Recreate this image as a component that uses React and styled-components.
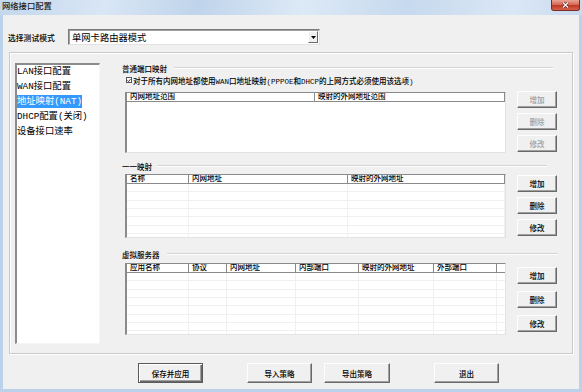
import React from 'react';
import styled, { createGlobalStyle } from 'styled-components';

const GlobalStyle = createGlobalStyle`
  html, body { margin: 0; padding: 0; background: #fff; }
  body {
    font-family: "Liberation Mono", "Noto Sans CJK SC", monospace;
    font-weight: 500;
    color: #000;
  }
  * { box-sizing: border-box; }
`;

const natCols = [{ w: 188, label: '内网地址范围' }, { w: 190, label: '映射的外网地址范围' }];
const oneCols = [{ w: 62, label: '名称' }, { w: 159, label: '内网地址' }, { w: 157, label: '映射的外网地址' }];
const vsCols = [
  { w: 62, label: '应用名称' },
  { w: 38, label: '协议' },
  { w: 69, label: '内网地址' },
  { w: 63, label: '内部端口' },
  { w: 75, label: '映射的外网地址' },
  { w: 63, label: '外部端口' },
  { w: 9, label: '' },
];

const navItems = ['LAN接口配置', 'WAN接口配置', '地址映射(NAT)', 'DHCP配置(关闭)', '设备接口速率'];

export default function App() {
  return (
    <>
      <GlobalStyle />
      <Window>
        <TitleBar>
          <Title>网络接口配置</Title>
          <CloseButton>
            <svg width="9" height="6" viewBox="0 0 9 6">
              <path d="M2 0.5 L7 5.5 M7 0.5 L2 5.5" stroke="#5a1a12" strokeWidth="2.4" />
              <path d="M2 0.5 L7 5.5 M7 0.5 L2 5.5" stroke="#fff" strokeWidth="1.3" />
            </svg>
          </CloseButton>
        </TitleBar>
        <Client>
          <ModeRow>
            <ModeLabel>选择测试模式</ModeLabel>
            <Select>
              <span>单网卡路由器模式</span>
              <SelectArrow>
                <svg width="5" height="3" viewBox="0 0 5 3">
                  <path d="M0 0 L5 0 L2.5 3 Z" fill="#000" />
                </svg>
              </SelectArrow>
            </Select>
          </ModeRow>

          <MainGroup>
            <NavList>
              {navItems.map((t, i) => (
                <NavItem key={t} $active={i === 2}>{t}</NavItem>
              ))}
            </NavList>

            <RightPane>
              <SectionHeader $mt={0} $mr={19}>
                <span>普通端口映射</span>
                <Rule $gap={7} />
              </SectionHeader>
              <CheckRow>
                <CheckBox>
                  <svg width="5" height="5" viewBox="0 0 5 5">
                    <path d="M0.6 2.4 L2 3.8 L4.4 0.8" stroke="#000" strokeWidth="1" fill="none" />
                  </svg>
                </CheckBox>
                <span>对于所有内网地址都使用WAN口地址映射(PPPOE和DHCP的上网方式必须使用该选项)</span>
              </CheckRow>
              <Block $mt={6}>
                <DataTable cols={natCols} rows={0} height={61} top={1} />
                <ButtonCol $pt={0} $gap={5}>
                  <SideButton $disabled>增加</SideButton>
                  <SideButton $disabled>删除</SideButton>
                  <SideButton $disabled>修改</SideButton>
                </ButtonCol>
              </Block>

              <SectionHeader $mt={8} $mr={25}>
                <span>一一映射</span>
                <Rule $gap={5} />
              </SectionHeader>
              <Block $mt={2}>
                <DataTable cols={oneCols} rows={7} height={64} top={1} />
                <ButtonCol $pt={2} $gap={5}>
                  <SideButton>增加</SideButton>
                  <SideButton>删除</SideButton>
                  <SideButton>修改</SideButton>
                </ButtonCol>
              </Block>

              <SectionHeader $mt={11} $mr={14}>
                <span>虚拟服务器</span>
                <Rule $gap={7} />
              </SectionHeader>
              <Block $mt={4}>
                <DataTable cols={vsCols} rows={8} height={72} top={0} />
                <ButtonCol $pt={4} $gap={7}>
                  <SideButton>增加</SideButton>
                  <SideButton>删除</SideButton>
                  <SideButton>修改</SideButton>
                </ButtonCol>
              </Block>
            </RightPane>
          </MainGroup>

          <Footer>
            <FooterButton $default $w={65} $ml={130}>保存并应用</FooterButton>
            <FooterButton $w={65} $ml={44}>导入策略</FooterButton>
            <FooterButton $w={66} $ml={12}>导出策略</FooterButton>
            <FooterButton $w={65} $ml={44}>退出</FooterButton>
          </Footer>
        </Client>
      </Window>
    </>
  );
}

function DataTable({ cols, rows, height, top }) {
  return (
    <TableBox $h={height} $mt={top}>
      <HeadRow>
        {cols.map((c, i) => (
          <HeadCell key={i} $w={c.w}>{c.label}</HeadCell>
        ))}
      </HeadRow>
      {Array.from({ length: rows }).map((_, r) => (
        <Row key={r}>
          {cols.map((c, i) => (
            <Cell key={i} $w={c.w} />
          ))}
        </Row>
      ))}
    </TableBox>
  );
}

const Window = styled.div`
  width: 582px;
  height: 392px;
  display: flex;
  flex-direction: column;
  background: #bcd2ea;
`;

const TitleBar = styled.div`
  height: 15px;
  display: flex;
  justify-content: space-between;
  align-items: flex-start;
  padding-left: 2px;
  background: linear-gradient(100deg, #c3d7ed 0%, #d9e6f5 18%, #bfd4eb 34%, #dde9f6 52%, #c6d9ee 70%, #dbe7f5 88%, #c8daee 100%);
`;

const Title = styled.div`
  font-size: 8.3px;
  line-height: 14px;
  color: #1a1a1a;
`;

const CloseButton = styled.div`
  width: 29px;
  height: 11px;
  margin-right: 2px;
  border: 1px solid #7c2b22;
  border-top: none;
  border-radius: 0 0 3px 3px;
  background: linear-gradient(#e9a697 0%, #d66a55 45%, #c13a26 55%, #d4634d 100%);
  display: flex;
  align-items: center;
  justify-content: center;
`;

const Client = styled.div`
  flex: 1;
  margin: 0 3px 3px 3px;
  padding: 14px 0 0 5px;
  background: #f0f0f0;
  display: flex;
  flex-direction: column;
`;

const ModeRow = styled.div`
  display: flex;
  align-items: center;
  height: 16px;
`;

const ModeLabel = styled.div`
  width: 60px;
  font-size: 7.8px;
`;

const Select = styled.div`
  width: 252px;
  height: 16px;
  display: flex;
  align-items: center;
  justify-content: space-between;
  padding-left: 3px;
  background: #fff;
  border: 1px solid;
  border-color: #7a7a7a #e3e3e3 #e3e3e3 #7a7a7a;
  box-shadow: inset 1px 1px 0 #a0a0a0;
  font-size: 9.3px;
  font-weight: 400;
`;

const SelectArrow = styled.div`
  width: 10px;
  height: 12px;
  margin-right: 1px;
  display: flex;
  align-items: center;
  justify-content: center;
  background: #f0f0f0;
  border: 1px solid;
  border-color: #fff #696969 #696969 #fff;
`;

const MainGroup = styled.div`
  width: 564px;
  height: 302px;
  margin: 7px 0 0 1px;
  padding: 10px 0 0 5px;
  display: flex;
  border: 1px solid #cacaca;
  box-shadow: inset 1px 1px 0 #fff, 1px 1px 0 #fff;
`;

const NavList = styled.div`
  width: 85px;
  height: 281px;
  display: flex;
  flex-direction: column;
  align-items: flex-start;
  background: #fff;
  border-style: solid;
  border-width: 2px 1px 1px 2px;
  border-color: #8c8c8c #f6f6f6 #f6f6f6 #8c8c8c;
`;

const NavItem = styled.div`
  height: 13px;
  line-height: 13px;
  margin-bottom: 2px;
  font-size: 9.3px;
  font-weight: 400;
  white-space: nowrap;
  color: ${(p) => (p.$active ? '#fff' : '#000')};
  background: ${(p) => (p.$active ? '#3399ff' : 'transparent')};
`;

const RightPane = styled.div`
  flex: 1;
  margin-left: 20px;
  display: flex;
  flex-direction: column;
`;

const SectionHeader = styled.div`
  height: 10px;
  margin-top: ${(p) => p.$mt}px;
  margin-right: ${(p) => p.$mr}px;
  padding-left: 2px;
  display: flex;
  align-items: center;
  font-size: 7.5px;
  white-space: nowrap;
`;

const Rule = styled.div`
  flex: 1;
  height: 2px;
  margin-left: ${(p) => p.$gap}px;
  border-top: 1px solid #d5d5d5;
  border-bottom: 1px solid #fff;
`;

const CheckRow = styled.div`
  height: 10px;
  margin-top: 2px;
  padding-left: 6px;
  display: flex;
  align-items: center;
  gap: 1px;
  font-size: 7.5px;
  white-space: nowrap;
`;

const CheckBox = styled.div`
  width: 6px;
  height: 6px;
  display: flex;
  align-items: center;
  justify-content: center;
  background: #fff;
  border: 1px solid #555;
`;

const Block = styled.div`
  display: flex;
  align-items: flex-start;
  margin-top: ${(p) => p.$mt}px;
  padding-left: 5px;
`;

const TableBox = styled.div`
  width: 381px;
  height: ${(p) => p.$h}px;
  margin-top: ${(p) => p.$mt}px;
  overflow: hidden;
  background: #fff;
  border-style: solid;
  border-width: 1px 1px 1px 2px;
  border-color: #8a8a8a #e3e3e3 #e3e3e3 #8a8a8a;
`;

const HeadRow = styled.div`
  display: flex;
  height: 9px;
  border-bottom: 1px solid #8a8a8a;
`;

const HeadCell = styled.div`
  width: ${(p) => p.$w}px;
  flex: none;
  height: 8px;
  padding-left: 3px;
  border-right: 1px solid #8a8a8a;
  font-size: 7.5px;
  line-height: 8px;
  white-space: nowrap;
  overflow: hidden;
`;

const Row = styled.div`
  display: flex;
  height: 8.35px;
  border-bottom: 1px solid #f0f0f0;
`;

const Cell = styled.div`
  width: ${(p) => p.$w}px;
  flex: none;
  border-right: 1px solid #f0f0f0;
`;

const ButtonCol = styled.div`
  display: flex;
  flex-direction: column;
  gap: ${(p) => p.$gap}px;
  margin-left: 11px;
  padding-top: ${(p) => p.$pt}px;
`;

const raised = `
  display: flex;
  align-items: center;
  justify-content: center;
  background: #f0f0f0;
  border: 1px solid;
  border-color: #fdfdfd #696969 #696969 #fdfdfd;
  box-shadow: inset -1px -1px 0 #a0a0a0;
  font-size: 7.5px;
  white-space: nowrap;
`;

const SideButton = styled.div`
  ${raised}
  width: 40px;
  height: 17px;
  color: ${(p) => (p.$disabled ? '#a0a0a0' : '#000')};
`;

const Footer = styled.div`
  display: flex;
  margin-top: 9px;
`;

const FooterButton = styled.div`
  ${raised}
  width: ${(p) => p.$w}px;
  height: 20px;
  margin-left: ${(p) => p.$ml}px;
  ${(p) =>
    p.$default &&
    `
    border-color: #5a5a5a;
    box-shadow: inset 1px 1px 0 #fff, inset -1px -1px 0 #696969, inset -2px -2px 0 #a0a0a0;
  `}
`;
